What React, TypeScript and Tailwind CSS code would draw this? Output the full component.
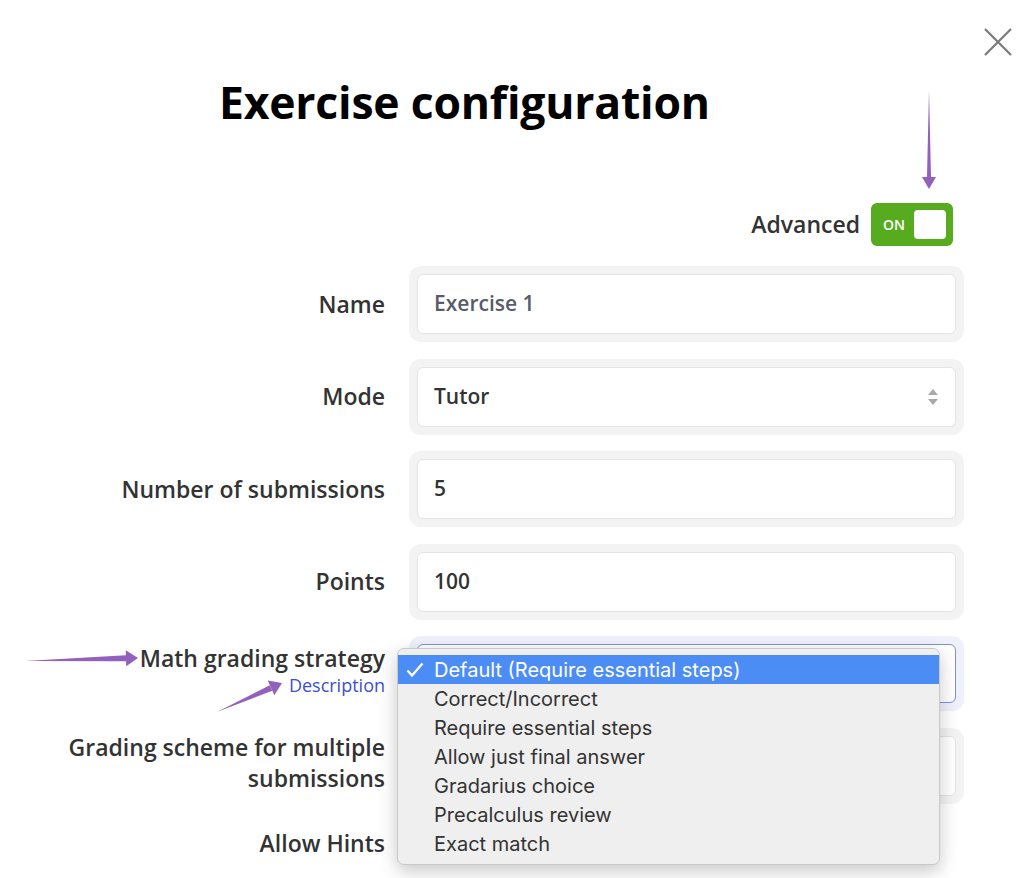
import React from "react";

const labelCls = "text-right text-[23px] font-semibold text-[#333] leading-[31px]";
const wellCls = "rounded-[12px] bg-[#f3f3f3] p-2";
const boxCls = "h-[60px] rounded-[6px] border border-[#e4e4e4] bg-white px-4 flex items-center text-[21px] font-semibold";

const options = [
    "Default (Require essential steps)",
    "Correct/Incorrect",
    "Require essential steps",
    "Allow just final answer",
    "Gradarius choice",
    "Precalculus review",
    "Exact match",
];

function Field({ children, className = "" }: { children?: React.ReactNode; className?: string }) {
    return (
        <div className={wellCls}>
            <div className={`${boxCls} ${className}`}>{children}</div>
        </div>
    );
}

function Arrow({ x1, y1, x2, y2, w = 2.5, hw = 7 }: { x1: number; y1: number; x2: number; y2: number; w?: number; hw?: number }) {
    // tapered annotation arrow, thin tail, triangle head
    const dx = x2 - x1;
    const dy = y2 - y1;
    const len = Math.hypot(dx, dy);
    const ux = dx / len;
    const uy = dy / len;
    const px = -uy;
    const py = ux;
    const hx = x2 - ux * 12;
    const hy = y2 - uy * 12;
    const shaft = `M${x1},${y1} L${hx + px * w},${hy + py * w} L${hx - px * w},${hy - py * w} Z`;
    const head = `M${x2},${y2} L${hx + px * hw},${hy + py * hw} L${hx - px * hw},${hy - py * hw} Z`;
    return (
        <g fill="#9161bd">
            <path d={shaft} />
            <path d={head} />
        </g>
    );
}

export default function App() {
    return (
        <div className="relative w-[1030px] h-[878px] overflow-hidden bg-white font-['Open_Sans',sans-serif]">
            <div className="flex justify-end pr-[17px] pt-[27px]">
                <svg width="30" height="30" viewBox="0 0 30 30" className="text-[#7a7a7a]">
                    <path d="M2 2 L28 28 M28 2 L2 28" stroke="currentColor" strokeWidth="2.2" />
                </svg>
            </div>
            <h1 className="ml-[219px] mt-[19px] text-[44.5px] font-bold leading-[52px] text-black tracking-[-0.2px]">
                Exercise configuration
            </h1>

            <div className="mt-[75px] flex items-center justify-end gap-[11px] pr-[77px]">
                <span className="text-[23px] font-semibold text-[#333]">Advanced</span>
                <div className="w-[82px] h-[43px] rounded-[6px] bg-[#56ab1e] flex items-center justify-between pl-[12px] pr-[7px]">
                    <span className="text-[14px] font-semibold text-white">ON</span>
                    <div className="w-[32px] h-[29px] rounded-[4px] bg-white" />
                </div>
            </div>

            <div className="mt-[20px] grid grid-cols-[385px_555px] gap-x-[24px] gap-y-[16.5px] items-center">
                <div className={labelCls}>Name</div>
                <Field className="text-[#575b6b]">Exercise 1</Field>

                <div className={labelCls}>Mode</div>
                <Field className="justify-between text-[#333]">
                    <span>Tutor</span>
                    <svg width="12" height="20" viewBox="0 0 12 20" className="text-[#a8a8a8]">
                        <path d="M6 2 L11 8 L1 8 Z M6 18 L11 12 L1 12 Z" fill="currentColor" />
                    </svg>
                </Field>

                <div className={labelCls}>Number of submissions</div>
                <Field className="text-[#333]">5</Field>

                <div className={labelCls}>Points</div>
                <Field className="text-[#333]">100</Field>

                <div className="self-start mt-[8px] flex flex-col items-end">
                    <span className="text-[23px] font-semibold text-[#333] leading-[28px]">Math grading strategy</span>
                    <span className="text-[18px] text-[#3c4fd0] leading-[26px]">Description</span>
                </div>
                <div className="relative">
                    <div className="rounded-[12px] bg-[#eef0fb] p-2">
                        <div className="h-[59px] rounded-[6px] border border-[#7e8fe2] bg-white" />
                    </div>
                    <div className="absolute left-[-12px] top-[12px] z-10 w-[543px] rounded-[7px] border border-[#c9c9c9] bg-[#efefef] py-[6px] shadow-[0_6px_18px_rgba(0,0,0,0.22)] font-['Inter',sans-serif] text-[20px] text-[#333]">
                        {options.map((o, i) => (
                            <div
                                key={o}
                                className={`relative h-[29px] flex items-center pl-[36px] leading-none ${i === 0 ? "bg-[#4c8df5] text-white" : ""}`}
                            >
                                {i === 0 && (
                                    <svg width="18" height="16" viewBox="0 0 18 16" className="absolute left-[8px] top-[7px]">
                                        <path d="M1.5 8.5 L6 13.5 L16.5 1.5" stroke="white" strokeWidth="2.3" fill="none" />
                                    </svg>
                                )}
                                {o}
                            </div>
                        ))}
                    </div>
                </div>

                <div className={`${labelCls} mt-[-6px]`}>
                    Grading scheme for multiple
                    <br />
                    submissions
                </div>
                <Field />

                <div className={labelCls}>Allow Hints</div>
                <div className="h-[46px]" />
            </div>

            <svg className="absolute inset-0 pointer-events-none" width="1030" height="878">
                <Arrow x1={929} y1={90} x2={929} y2={189} w={2} />
                <Arrow x1={25} y1={661} x2={138} y2={658} w={3} hw={8} />
                <Arrow x1={217} y1={712} x2={282} y2={683} w={3} hw={8} />
            </svg>
        </div>
    );
}
